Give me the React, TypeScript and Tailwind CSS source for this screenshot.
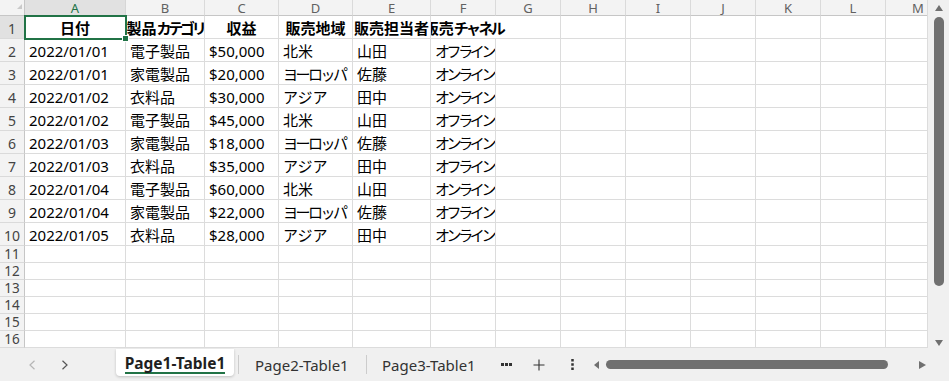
import React from 'react';

const COLS = ['A', 'B', 'C', 'D', 'E', 'F', 'G', 'H', 'I', 'J', 'K', 'L', 'M'];
const DATA = [
  ['2022/01/01', '電子製品', '$50,000', '北米', '山田', 'オフライン'],
  ['2022/01/01', '家電製品', '$20,000', 'ヨーロッパ', '佐藤', 'オンライン'],
  ['2022/01/02', '衣料品', '$30,000', 'アジア', '田中', 'オンライン'],
  ['2022/01/02', '電子製品', '$45,000', '北米', '山田', 'オフライン'],
  ['2022/01/03', '家電製品', '$18,000', 'ヨーロッパ', '佐藤', 'オンライン'],
  ['2022/01/03', '衣料品', '$35,000', 'アジア', '田中', 'オフライン'],
  ['2022/01/04', '電子製品', '$60,000', '北米', '山田', 'オンライン'],
  ['2022/01/04', '家電製品', '$22,000', 'ヨーロッパ', '佐藤', 'オフライン'],
  ['2022/01/05', '衣料品', '$28,000', 'アジア', '田中', 'オンライン'],
];

const TRACK: Record<string, string> = {
  'オフライン': 'tracking-[-3.4px]',
  'オンライン': 'tracking-[-3.4px]',
  'ヨーロッパ': 'tracking-[-2.5px]',
};

function Head({ i }: { i: number }) {
  if (i === 0) return <span>日付</span>;
  if (i === 1)
    return (
      <span>
        製品<span className="tracking-[-3.3px]">カテゴリ</span>
      </span>
    );
  if (i === 2) return <span>収益</span>;
  if (i === 3) return <span>販売地域</span>;
  if (i === 4) return <span>販売担当者</span>;
  return (
    <span>
      販売<span className="tracking-[-2.6px]">チャネル</span>
    </span>
  );
}

function Grid() {
  const cells: React.ReactNode[] = [];
  cells.push(
    <div key="corner" className="relative bg-[#f3f3f3] border-r border-b border-r-[#c6c6c6] border-b-[#c6c6c6]">
      <svg className="absolute right-[2px] bottom-[6px]" width="5" height="5" viewBox="0 0 5 5">
        <polygon points="5,0 5,5 0,5" fill="#cacaca" />
      </svg>
    </div>
  );
  COLS.forEach((c, i) => {
    cells.push(
      <div
        key={'h' + c}
        className={
          i === 0
            ? 'flex justify-center bg-[#e1e1e1] text-[#217346] text-[13px] leading-[16px] border-r border-b border-r-[#d6d6d6] border-b-[#c6c6c6]'
            : 'flex justify-center bg-[#f3f3f3] text-[#616161] text-[13px] leading-[16px] border-r border-b border-r-[#dadada] border-b-[#c6c6c6]'
        }
      >
        {c}
      </div>
    );
  });
  for (let r = 1; r <= 16; r++) {
    const tall = r <= 10;
    cells.push(
      <div
        key={'r' + r}
        className={
          (r === 1 ? 'bg-[#e1e1e1] ' : 'bg-[#f3f3f3] ') +
          (tall ? 'pt-[2px] leading-[21px] text-[14px] ' : 'leading-[16px] text-[13.5px] ') +
          'flex items-center justify-center text-[#444] border-r border-b border-r-[#c6c6c6] border-b-[#dadada]'
        }
      >
        {r}
      </div>
    );
    COLS.forEach((c, ci) => {
      const key = c + r;
      if (r === 1 && ci === 0) {
        cells.push(
          <div key={key} className="relative flex items-end justify-center whitespace-nowrap font-bold text-[15px] leading-[20px] text-black border-r border-b border-[#dcdcdc]">
            <Head i={0} />
            <div className="absolute -left-[1px] -top-[1px] -right-[2px] -bottom-[2px] border-2 border-[#217346] z-10">
              <div className="absolute -right-[4px] -bottom-[4px] w-[7px] h-[7px] bg-[#217346] border border-white" />
            </div>
          </div>
        );
      } else if (r === 1 && ci === 5) {
        cells.push(
          <div key={key} className="flex items-end justify-center whitespace-nowrap font-bold text-[15px] leading-[20px] text-black border-b border-[#dcdcdc] [clip-path:inset(0_-80px_0_0)]">
            <Head i={5} />
          </div>
        );
      } else if (r === 1 && ci < 5) {
        cells.push(
          <div key={key} className="flex items-end justify-center overflow-hidden whitespace-nowrap font-bold text-[15px] leading-[20px] text-black border-r border-b border-[#dcdcdc]">
            <Head i={ci} />
          </div>
        );
      } else if (r >= 2 && r <= 10 && ci < 6) {
        const v = DATA[r - 2][ci];
        cells.push(
          <div key={key} className="flex items-end px-[4px] overflow-hidden whitespace-nowrap text-[15px] leading-[20px] text-black border-r border-b border-[#dcdcdc]">
            <span className={TRACK[v] || ''}>{v}</span>
          </div>
        );
      } else {
        cells.push(<div key={key} className="border-r border-b border-[#dcdcdc]" />);
      }
    });
  }
  return (
    <div className="w-[928px] h-[348px] overflow-hidden border-r border-[#dcdcdc] bg-white">
      <div className="w-[951px] grid grid-cols-[25px_101px_79px_74px_74px_78px_65px_65px_65px_65px_65px_65px_65px_65px] grid-rows-[16px_repeat(10,23px)_repeat(6,17px)]">
        {cells}
      </div>
    </div>
  );
}

export default function App() {
  return (
    <div className="w-[949px] h-[381px] overflow-hidden flex flex-col bg-[#f0f0f0] font-['Noto_Sans','Noto_Sans_CJK_JP',sans-serif]">
      <div className="flex h-[348px]">
        <Grid />
        <div className="w-[21px] h-[348px] flex flex-col items-center pt-[5px] pb-[2px]">
          <svg width="8" height="6" viewBox="0 0 8 6">
            <polygon points="4,0 8,6 0,6" fill="#707070" />
          </svg>
          <div className="mt-[6px] w-[10px] h-[269px] rounded-full bg-[#707070]" />
          <div className="flex-1" />
          <svg width="8" height="6" viewBox="0 0 8 6">
            <polygon points="0,0 8,0 4,6" fill="#707070" />
          </svg>
        </div>
      </div>
      <div className="h-[33px] flex items-center">
        <div className="w-[116px] flex items-center">
          <svg className="ml-[28px]" width="8" height="10" viewBox="0 0 8 10">
            <path d="M6.5 0.8 L2 5 L6.5 9.2" stroke="#b5b5b5" strokeWidth="1.2" fill="none" />
          </svg>
          <svg className="ml-[25px]" width="8" height="10" viewBox="0 0 8 10">
            <path d="M1.5 0.8 L6 5 L1.5 9.2" stroke="#555" strokeWidth="1.2" fill="none" />
          </svg>
        </div>
        <div className="self-start mt-[1px] w-[118px] h-[27px] bg-white rounded-b-[4px] shadow-[0_1px_3px_rgba(0,0,0,0.2)] flex justify-center pt-[6px]">
          <span className="h-[19px] text-[15.5px] leading-[17px] font-bold whitespace-nowrap text-[#1f1f1f] border-b-2 border-[#217346]">Page1-Table1</span>
        </div>
        <div className="ml-[4px] w-px h-[19px] bg-[#cccccc]" />
        <div className="w-[127px] pl-[16px] text-[15px] leading-[18px] text-[#333] whitespace-nowrap">Page2-Table1</div>
        <div className="w-px h-[19px] bg-[#cccccc]" />
        <div className="w-[127px] pl-[15px] text-[15px] leading-[18px] text-[#333] whitespace-nowrap">Page3-Table1</div>
        <svg className="ml-[7px]" width="11" height="3" viewBox="0 0 11 3">
          <rect x="0" y="0" width="3" height="3" fill="#333" />
          <rect x="4" y="0" width="3" height="3" fill="#333" />
          <rect x="8" y="0" width="3" height="3" fill="#333" />
        </svg>
        <svg className="ml-[21px]" width="12" height="12" viewBox="0 0 12 12">
          <path d="M6 0.5 V11.5 M0.5 6 H11.5" stroke="#333" strokeWidth="1.1" fill="none" />
        </svg>
        <svg className="ml-[26px]" width="3" height="11" viewBox="0 0 3 11">
          <rect x="0.25" y="0" width="2.5" height="2.5" fill="#333" />
          <rect x="0.25" y="4.25" width="2.5" height="2.5" fill="#333" />
          <rect x="0.25" y="8.5" width="2.5" height="2.5" fill="#333" />
        </svg>
        <svg className="ml-[20px]" width="5" height="8" viewBox="0 0 5 8">
          <polygon points="5,0 5,8 0,4" fill="#707070" />
        </svg>
        <div className="ml-[7px] w-[282px] h-[9px] rounded-full bg-[#707070]" />
        <svg className="ml-[31px]" width="7" height="8" viewBox="0 0 7 8">
          <polygon points="0,0 7,4 0,8" fill="#707070" />
        </svg>
      </div>
    </div>
  );
}
